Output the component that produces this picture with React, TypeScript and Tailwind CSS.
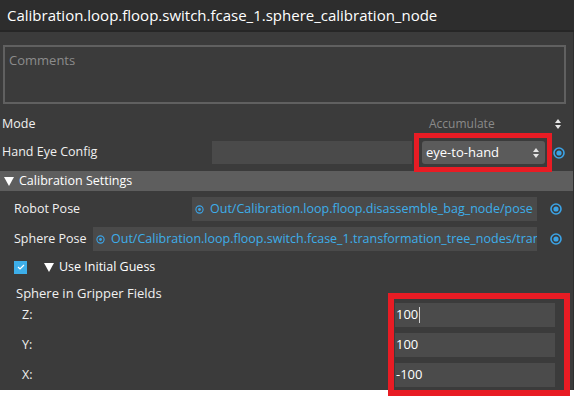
import React from 'react'

const font = { fontFamily: '"Open Sans", "Noto Sans", sans-serif' }

function Spinner({ color = '#e6e6e6' }: { color?: string }) {
  return (
    <svg width="6" height="10" viewBox="0 0 6 10" className="shrink-0">
      <path d="M3 0 L6 4 L0 4 Z" fill={color} />
      <path d="M3 10 L6 6 L0 6 Z" fill={color} />
    </svg>
  )
}

function RadioIcon() {
  return (
    <svg width="12" height="12" viewBox="0 0 12 12" className="shrink-0">
      <circle cx="6" cy="6" r="5" fill="none" stroke="#3ba3e6" strokeWidth="1.6" />
      <circle cx="6" cy="6" r="2.6" fill="#3ba3e6" />
    </svg>
  )
}

function TargetIcon() {
  return (
    <svg width="9" height="9" viewBox="0 0 9 9" className="shrink-0">
      <circle cx="4.5" cy="4.5" r="3.6" fill="none" stroke="#3ba3e6" strokeWidth="1.1" />
      <circle cx="4.5" cy="4.5" r="1.4" fill="#3ba3e6" />
    </svg>
  )
}

function Caret() {
  return (
    <svg width="10" height="9" viewBox="0 0 10 9" className="shrink-0">
      <path d="M0 0 L10 0 L5 9 Z" fill="#ffffff" />
    </svg>
  )
}

function PoseRow({ label, left, path }: { label: string; left: number; path: string }) {
  return (
    <div className="flex h-[24px] items-center">
      <div className="pl-[14px] text-[12.5px] text-[#f0f0f0]" style={{ width: left }}>{label}</div>
      <div className="flex h-[24px] min-w-0 flex-1 items-center gap-[6px] overflow-hidden bg-[#4a4a4a] pl-[3px]">
        <TargetIcon />
        <span className="whitespace-nowrap text-[12.5px] text-[#3daee9]">{path}</span>
      </div>
      <div className="flex w-[36px] shrink-0 justify-center pl-[2px]">
        <RadioIcon />
      </div>
    </div>
  )
}

function FieldRow({ label, value, caret }: { label: string; value: string; caret?: boolean }) {
  return (
    <div className="flex h-[24px] items-center">
      <div className="w-[395px] pl-[22px] text-[12.5px] text-[#f0f0f0]">{label}</div>
      <div className="flex h-[24px] w-[160px] items-center bg-[#4b4b4b] pl-[1px] text-[13px] text-white">
        {value}
        {caret && <span className="ml-[1px] inline-block h-[16px] w-[1px] bg-[#d0d0d0]" />}
      </div>
    </div>
  )
}

export default function App() {
  return (
    <div className="relative h-[397px] w-[574px] overflow-hidden bg-white" style={font}>
      <div className="flex h-[390px] flex-col bg-[#3c3c3c]">
        <div className="flex h-[30px] items-center bg-[#2d2d2d] px-[7px] text-[15px] text-white">
          Calibration.loop.floop.switch.fcase_1.sphere_calibration_node
        </div>
        <div className="h-[2px] bg-[#262626]" />

        <div className="flex flex-1 flex-col border-r border-[#2e2e2e] bg-[#3b3b3b]">
          <div className="ml-[3px] mt-[13px] h-[59px] w-[563px] border-2 border-[#606060] px-[4px] pt-[4px] text-[13px] text-[#8c8c8c]">
            Comments
          </div>

          <div className="mt-[10px] flex h-[20px] items-center">
            <div className="w-[429px] pl-[2px] text-[12.5px] text-[#f0f0f0]">Mode</div>
            <div className="w-[126px] text-[12px] text-[#8a8a8a]">Accumulate</div>
            <Spinner />
          </div>

          <div className="mt-[7px] flex h-[23px] items-center">
            <div className="w-[212px] pl-[2px] text-[12.5px] text-[#f0f0f0]">Hand Eye Config</div>
            <div className="h-[23px] w-[200px] bg-[#4a4a4a]" />
            <div className="ml-[10px] flex h-[23px] w-[123px] items-center justify-between rounded-[3px] bg-[#5b5b5b] pl-[4px] pr-[6px] text-[13px] text-white">
              eye-to-hand
              <Spinner />
            </div>
            <div className="ml-[8px]">
              <RadioIcon />
            </div>
          </div>

          <div className="mt-[7px] flex h-[20px] items-center gap-[5px] bg-[#5e5e5e] pl-[4px] text-[12.5px] text-white">
            <Caret />
            Calibration Settings
          </div>

          <div className="mt-[6px] flex flex-col gap-[6px]">
            <PoseRow label="Robot Pose" left={192} path="Out/Calibration.loop.floop.disassemble_bag_node/pose" />
            <PoseRow label="Sphere Pose" left={93} path="Out/Calibration.loop.floop.switch.fcase_1.transformation_tree_nodes/transform" />
          </div>

          <div className="mt-[9px] flex h-[14px] items-center">
            <div className="ml-[14px] flex h-[13px] w-[13px] items-center justify-center bg-[#3daee9]">
              <svg width="8" height="6" viewBox="0 0 8 6">
                <path d="M1 3 L3 5 L7 1" fill="none" stroke="#ffffff" strokeWidth="1.2" />
              </svg>
            </div>
            <div className="ml-[17px] flex items-center gap-[5px] text-[12.5px] text-white">
              <Caret />
              Use Initial Guess
            </div>
          </div>

          <div className="mt-[10px] pl-[16px] text-[13px] leading-[18px] text-[#f0f0f0]">Sphere in Gripper Fields</div>

          <div className="mt-[1px] flex flex-col gap-[6px]">
            <FieldRow label="Z:" value="100" caret />
            <FieldRow label="Y:" value="100" />
            <FieldRow label="X:" value="-100" />
          </div>
        </div>
      </div>

      {/* annotation boxes */}
      <div className="absolute left-[414px] top-[133px] h-[39px] w-[138px] border-[5px] border-[#e81c24]" />
      <div className="absolute left-[388px] top-[293px] h-[103px] w-[182px] border-[6px] border-[#e81c24]" />
    </div>
  )
}
